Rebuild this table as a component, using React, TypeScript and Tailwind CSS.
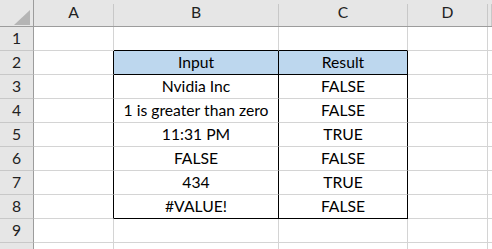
import React from "react";

const cols = ["A", "B", "C", "D", ""];
const colW = [34, 80, 165, 129, 80, 4];

type Row = { input: string; result: string } | null;

const rows: Row[] = [
  null,
  { input: "Input", result: "Result" },
  { input: "Nvidia Inc", result: "FALSE" },
  { input: "1 is greater than zero", result: "FALSE" },
  { input: "11:31 PM", result: "TRUE" },
  { input: "FALSE", result: "FALSE" },
  { input: "434", result: "TRUE" },
  { input: "#VALUE!", result: "FALSE" },
  null,
  null,
];

const font = { fontFamily: "Lato, 'Liberation Sans', sans-serif" };

export default function App() {
  const template = colW.map((w) => `${w}px`).join(" ");
  return (
    <div className="w-[492px] h-[249px] overflow-hidden bg-white text-[15.7px] text-black" style={font}>
      <div
        className="grid"
        style={{ gridTemplateColumns: template, gridTemplateRows: "27px", gridAutoRows: "24px" }}
      >
        {/* corner */}
        <div className="relative bg-[#e6e6e6] border-r border-b border-[#9c9c9c]">
          <svg className="absolute left-[14px] top-[10px]" width="16" height="15" viewBox="0 0 16 15">
            <polygon points="16,0 16,15 0,15" fill="#b5b5b5" />
          </svg>
        </div>
        {cols.map((c, i) => (
          <div
            key={"h" + i}
            className="bg-[#e6e6e6] border-b border-[#9c9c9c] flex items-end text-[#222]"
          >
            <div className="flex-1 self-center text-center">{c}</div>
            <div className="w-px h-[22px] bg-[#c8c8c8]" />
          </div>
        ))}
        {rows.map((r, ri) => {
          const n = ri + 1;
          const inTable = r !== null;
          const isHead = n === 2;
          const aboveTable = n === 1;
          const lastRow = n === 8;
          const bBottom = aboveTable || isHead || lastRow ? "border-b-black" : "border-b-[#d4d4d4]";
          const fill = isHead ? "bg-[#bdd7ee]" : "bg-white";
          const rightEdge = inTable ? "border-r-black" : "border-r-[#d4d4d4]";
          return (
            <React.Fragment key={ri}>
              <div className="bg-[#e6e6e6] border-r border-b border-r-[#9c9c9c] border-b-[#c8c8c8] flex items-center justify-center text-[#222]">
                {n < 10 ? n : null}
              </div>
              <div className={"border-r border-b border-b-[#d4d4d4] " + rightEdge} />
              <div className={"border-r border-b flex items-center justify-center " + fill + " " + bBottom + " " + rightEdge}>
                {r?.input}
              </div>
              <div className={"border-r border-b flex items-center justify-center " + fill + " " + bBottom + " " + rightEdge}>
                {r?.result}
              </div>
              <div className="border-r border-b border-[#d4d4d4]" />
              <div className="border-b border-[#d4d4d4]" />
            </React.Fragment>
          );
        })}
      </div>
    </div>
  );
}
